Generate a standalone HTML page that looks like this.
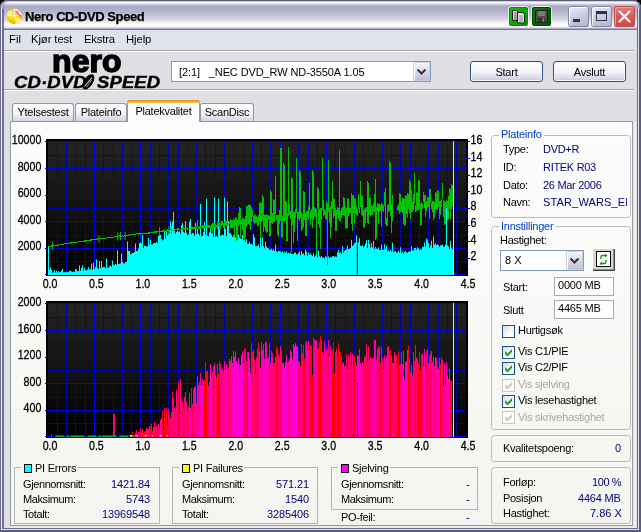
<!DOCTYPE html>
<html><head><meta charset="utf-8"><title>Nero CD-DVD Speed</title>
<style>
html,body{margin:0;padding:0;background:#e0dfe3;}
body{width:641px;height:532px;position:relative;overflow:hidden;font-family:"Liberation Sans",sans-serif;font-size:11px;}
.t{will-change:transform;position:absolute;white-space:nowrap;line-height:13px;font-family:"Liberation Sans",sans-serif;font-size:11px;color:#000;}
</style></head><body>
<div style="position:absolute;left:0px;top:0px;width:641px;height:532px;background:#e0dfe3;"></div>
<div style="position:absolute;left:0;top:0;width:641px;height:10px;background:#000;"></div>
<div style="position:absolute;left:0px;top:0px;width:641px;height:30px;background:linear-gradient(#5c5c7c 0px,#9a9ab4 1px,#ffffff 2px,#f4f4f8 3px,#c8c8dc 4.5px,#a9a9c5 6.5px,#b2b2ca 11px,#c0c0d2 15px,#d4d4e0 19px,#ececf0 22px,#ffffff 24.5px,#fcfcfc 26px,#e4e4e6 27.5px,#a8a8c0 28.5px,#787898 29.5px);border-radius:8px 8px 0 0;box-shadow:inset 1px 0 0 #6a6a88,inset -1px 0 0 #5c5c7c,inset 0 1px 0 #5c5c7c,inset 2px 0 0 rgba(255,255,255,0.55),inset -2px 0 0 rgba(140,140,172,0.6),inset 4px 0 0 rgba(140,140,172,0.5);"></div>
<div style="position:absolute;left:4px;top:30px;width:633px;height:20px;background:#e0e2ec;"></div>
<div style="position:absolute;left:4px;top:50px;width:630px;height:1px;background:#a4a4a8;"></div>
<div style="position:absolute;left:4px;top:51px;width:630px;height:1px;background:#fff;"></div>
<div style="position:absolute;left:4px;top:89px;width:630px;height:1px;background:#a4a4a8;"></div>
<div style="position:absolute;left:4px;top:90px;width:630px;height:1px;background:#fff;"></div>
<div style="position:absolute;left:0px;top:9px;width:641px;height:523px;border-left:1px solid #686890;border-right:2px solid #5c5c7c;border-bottom:2px solid #5c5c7c;box-sizing:border-box;"></div>
<div style="position:absolute;left:1px;top:9px;width:638px;height:521px;border-left:1px solid #f0f0f6;border-right:1px solid #e0e0ec;border-bottom:1px solid #e0e0ec;box-sizing:border-box;"></div>
<div style="position:absolute;left:2px;top:9px;width:636px;height:520px;border-left:2px solid #6e6e92;border-right:1px solid #6c6c8c;border-bottom:1px solid #6c6c8c;box-sizing:border-box;"></div>
<svg style="position:absolute;left:5.5px;top:7.5px" width="17" height="17" viewBox="0 0 17 17"><defs><radialGradient id="cd" cx="0.4" cy="0.4" r="0.65"><stop offset="0" stop-color="#ffe860"/><stop offset="0.55" stop-color="#ffd000"/><stop offset="1" stop-color="#e0a000"/></radialGradient></defs><circle cx="8.3" cy="8.3" r="7.7" fill="url(#cd)"/><path d="M8.3 8.3 L0.6 8.3 A7.7 7.7 0 0 1 4.4 1.7 Z" fill="#fff080"/><path d="M8.3 8.3 L15.5 11 A7.7 7.7 0 0 1 9.6 15.9 Z" fill="#fff080"/><path d="M8.3 8.3 L7.6 0.7 A7.7 7.7 0 0 1 15.9 7 Z" fill="#f2eeee"/><circle cx="8.3" cy="8.3" r="1.4" fill="#fff8c8"/><path d="M9.5 2.8 L14.2 8" stroke="#e83818" stroke-width="1.1"/><path d="M12.5 2.8 L11.3 5.4 M9.3 5 L10.5 7" stroke="#f07050" stroke-width="0.9"/></svg>
<span class="t" style="left:25.3px;top:10.3px;color:#000;font-size:13px;letter-spacing:-0.42px;font-weight:bold;-webkit-text-stroke:0.25px #000;">Nero CD-DVD Speed</span>
<span class="t" style="left:8.5px;top:32.8px;color:#000;font-size:11.3px;letter-spacing:0px;">Fil</span>
<span class="t" style="left:30.5px;top:32.8px;color:#000;font-size:11.3px;letter-spacing:-0.1px;">Kjør test</span>
<span class="t" style="left:83.5px;top:32.8px;color:#000;font-size:11.3px;letter-spacing:-0.2px;">Ekstra</span>
<span class="t" style="left:125.5px;top:32.8px;color:#000;font-size:11.3px;letter-spacing:-0.1px;">Hjelp</span>
<div style="position:absolute;left:568px;top:6px;width:21px;height:21px;border-radius:3px;background:linear-gradient(160deg,#f0f0f8,#ccccde 50%,#b0b0cc);box-shadow:inset 0 0 0 1px #8484a8, inset 1px 1px 0 1px #fff;"></div>
<div style="position:absolute;left:591px;top:6px;width:21px;height:21px;border-radius:3px;background:linear-gradient(160deg,#f0f0f8,#ccccde 50%,#b0b0cc);box-shadow:inset 0 0 0 1px #8484a8, inset 1px 1px 0 1px #fff;"></div>
<div style="position:absolute;left:614px;top:6px;width:21px;height:21px;border-radius:3px;background:linear-gradient(#e88080,#d85c5c 45%,#c84848);box-shadow:inset 0 0 0 1px #b85050, inset 1px 1px 0 1px #f0a0a0;"></div>
<div style="position:absolute;left:573px;top:19px;width:7px;height:3px;background:#30304c;"></div>
<div style="position:absolute;left:596px;top:11px;width:11px;height:10px;border:1px solid #30304c;border-top:3px solid #30304c;box-sizing:border-box;"></div>
<svg style="position:absolute;left:614px;top:6px" width="21" height="21"><path d="M5.5 5.5 L15.5 15.5 M15.5 5.5 L5.5 15.5" stroke="#fff" stroke-width="2.3" stroke-linecap="round"/></svg>
<div style="position:absolute;left:509px;top:7px;width:19px;height:19px;border-radius:3px;background:linear-gradient(135deg,#18c018,#00a800 60%,#009800);box-shadow:inset 0 0 0 1px #009000, 0 0 0 1px rgba(255,255,255,0.75);"></div>
<div style="position:absolute;left:532px;top:7px;width:19px;height:19px;border-radius:3px;background:linear-gradient(135deg,#088808,#006800 60%,#005400);box-shadow:inset 0 0 0 1px #004000, 0 0 0 1px rgba(255,255,255,0.75);"></div>
<svg style="position:absolute;left:509px;top:7px" width="19" height="19"><path d="M3.5 3.5h4l1.5 1.5v8.5h-5.5z" fill="#d4d4d4" stroke="#202020" stroke-width="1"/><path d="M5 6h3M5 8h3M5 10h3M5 12h3" stroke="#686868" stroke-width="0.9"/><path d="M8.5 5.5h5l2 2v8.5h-7z" fill="#e4e4e4" stroke="#202020" stroke-width="1"/><path d="M10 9h4M10 11h4M10 13h4M10 15h4" stroke="#787878" stroke-width="0.9"/></svg>
<svg style="position:absolute;left:532px;top:7px" width="19" height="19"><rect x="3.5" y="3.5" width="12" height="12" fill="#4c4c4c" stroke="#181818" stroke-width="1"/><rect x="6" y="4" width="7" height="5" fill="#7c7c7c"/><rect x="6" y="11" width="7" height="4.5" fill="#303030"/><rect x="10.5" y="11.5" width="1.6" height="3.2" fill="#8c8c8c"/><rect x="13.6" y="4.2" width="1" height="1" fill="#30c030"/></svg>
<span class="t" style="left:52px;top:45.5px;font-size:32px;font-weight:bold;letter-spacing:0.1px;line-height:30px;-webkit-text-stroke:1.5px #000">nero</span>
<span class="t" style="left:14px;top:72.8px;font-size:13px;font-weight:bold;font-style:italic;letter-spacing:0.1px;line-height:16px;transform:scale(1.42,1.25);transform-origin:0 0;-webkit-text-stroke:0.35px #000">CD·DVD</span>
<span class="t" style="left:96.5px;top:72.8px;font-size:13px;font-weight:bold;font-style:italic;letter-spacing:0.1px;line-height:16px;transform:scale(1.42,1.25);transform-origin:0 0;-webkit-text-stroke:0.35px #000">SPEED</span>
<svg style="position:absolute;left:80px;top:73px" width="17" height="18"><ellipse cx="8.3" cy="8.8" rx="4.6" ry="8.6" transform="rotate(33 8.3 8.8)" fill="#000"/><path d="M4.5 13.5 L12 4.5" stroke="#e0dfe3" stroke-width="1.1"/><path d="M6.5 14 Q10 10 11.5 7" stroke="#e0dfe3" stroke-width="0.7" fill="none"/></svg>
<div style="position:absolute;left:171px;top:61px;width:260px;height:21px;background:#fff;border:1px solid #7f9db9;box-sizing:border-box;"></div>
<span class="t" style="left:178.5px;top:65.9px;color:#000;font-size:11px;letter-spacing:-0.1px;">[2:1]&nbsp;&nbsp; _NEC DVD_RW ND-3550A 1.05</span>
<div style="position:absolute;left:413px;top:62px;width:17px;height:19px;border-radius:2px;background:linear-gradient(#f4f4fa,#dcdce8 50%,#bcbcd0);box-shadow:inset 0 0 0 1px #ccccdc, inset 1px 1px 0 1px #fff;"></div>
<svg style="position:absolute;left:413px;top:62px" width="17" height="19"><path d="M4.5 7.5 L8.5 11.5 L12.5 7.5" stroke="#303040" stroke-width="2" fill="none"/></svg>
<div style="position:absolute;left:470px;top:61px;width:73px;height:21px;border-radius:3px;border:1px solid #334c80;box-sizing:border-box;background:linear-gradient(#ffffff,#f4f4f8 50%,#d8d8e8 85%,#c0c0d8);box-shadow:inset 0 0 0 1px #f8f8ff;"></div>
<span class="t" style="left:470px;top:66px;width:73px;text-align:center;letter-spacing:-0.2px">Start</span>
<div style="position:absolute;left:553px;top:61px;width:73px;height:21px;border-radius:3px;border:1px solid #334c80;box-sizing:border-box;background:linear-gradient(#ffffff,#f4f4f8 50%,#d8d8e8 85%,#c0c0d8);box-shadow:inset 0 0 0 1px #f8f8ff;"></div>
<span class="t" style="left:553px;top:66px;width:73px;text-align:center;letter-spacing:-0.2px">Avslutt</span>
<div style="position:absolute;left:10px;top:121px;width:626px;height:407px;background:#ecece4;"></div>
<div style="position:absolute;left:10px;top:121px;width:623px;height:405px;background:linear-gradient(#fcfcfe,#f9f9f7 45%,#f4f4f0);border:1px solid #919b9c;box-sizing:border-box;"></div>
<div style="position:absolute;left:12px;top:103px;width:62px;height:18px;border-radius:3px 3px 0 0;border:1px solid #919b9c;border-bottom:none;box-sizing:border-box;background:linear-gradient(#ffffff,#f0f0f6 60%,#d4d4e4);"></div>
<span class="t" style="left:12px;top:106.3px;width:62px;text-align:center;letter-spacing:-0.25px">Ytelsestest</span>
<div style="position:absolute;left:75px;top:103px;width:52px;height:18px;border-radius:3px 3px 0 0;border:1px solid #919b9c;border-bottom:none;box-sizing:border-box;background:linear-gradient(#ffffff,#f0f0f6 60%,#d4d4e4);"></div>
<span class="t" style="left:75px;top:106.3px;width:52px;text-align:center;letter-spacing:-0.25px">Plateinfo</span>
<div style="position:absolute;left:200px;top:103px;width:54px;height:18px;border-radius:3px 3px 0 0;border:1px solid #919b9c;border-bottom:none;box-sizing:border-box;background:linear-gradient(#ffffff,#f0f0f6 60%,#d4d4e4);"></div>
<span class="t" style="left:200px;top:106.3px;width:54px;text-align:center;letter-spacing:-0.25px">ScanDisc</span>
<div style="position:absolute;left:127px;top:100px;width:73px;height:22px;border-radius:3px 3px 0 0;border:1px solid #919b9c;border-bottom:none;box-sizing:border-box;background:#fcfcfe;"></div>
<div style="position:absolute;left:127px;top:100px;width:73px;height:3px;border-radius:3px 3px 0 0;background:linear-gradient(#e68b2c,#ffc73c);"></div>
<span class="t" style="left:127px;top:105.3px;width:73px;text-align:center;letter-spacing:-0.25px">Platekvalitet</span>
<svg width="641" height="532" viewBox="0 0 641 532" style="position:absolute;left:0;top:0" font-family="Liberation Sans, sans-serif" font-size="11">
<defs><linearGradient id="g1" x1="0" y1="0" x2="0" y2="1"><stop offset="0" stop-color="#242424"/><stop offset="1" stop-color="#000"/></linearGradient></defs>
<rect x="46" y="139" width="422" height="137" fill="#000" shape-rendering="crispEdges"/>
<rect x="48" y="141" width="418" height="134" fill="url(#g1)" shape-rendering="crispEdges"/>
<path d="M48 155.5H466M48 181.5H466M48 208.5H466M48 235.5H466M48 261.5H466M57.5 141V275M66.5 141V275M75.5 141V275M85.5 141V275M103.5 141V275M113.5 141V275M122.5 141V275M131.5 141V275M150.5 141V275M159.5 141V275M168.5 141V275M178.5 141V275M196.5 141V275M205.5 141V275M215.5 141V275M224.5 141V275M243.5 141V275M252.5 141V275M261.5 141V275M270.5 141V275M289.5 141V275M298.5 141V275M308.5 141V275M317.5 141V275M335.5 141V275M345.5 141V275M354.5 141V275M363.5 141V275M382.5 141V275M391.5 141V275M400.5 141V275M410.5 141V275M428.5 141V275M438.5 141V275M447.5 141V275M456.5 141V275" stroke="#0000b4" stroke-width="1" fill="none" shape-rendering="crispEdges"/>
<path d="M45 141.5H466M45 168.5H466M45 195.5H466M45 221.5H466M45 248.5H466M45 274.5H466M94.5 141V275M140.5 141V275M187.5 141V275M233.5 141V275M280.5 141V275M326.5 141V275M373.5 141V275M419.5 141V275" stroke="#0000ee" stroke-width="1" fill="none" shape-rendering="crispEdges"/>
<path d="M48.0 275.0 L48.0 246.6 L49.0 246.6 L49.0 269.6 L50.0 269.6 L50.0 266.9 L51.0 266.9 L51.0 269.8 L52.0 269.8 L52.0 272.5 L53.0 272.5 L53.0 272.5 L54.0 272.5 L54.0 270.2 L55.0 270.2 L55.0 272.4 L56.0 272.4 L56.0 270.8 L57.0 270.8 L57.0 272.5 L58.0 272.5 L58.0 271.2 L59.0 271.2 L59.0 272.2 L60.0 272.2 L60.0 272.1 L61.0 272.1 L61.0 270.5 L62.0 270.5 L62.0 268.9 L63.0 268.9 L63.0 272.2 L64.0 272.2 L64.0 272.0 L65.0 272.0 L65.0 272.5 L66.0 272.5 L66.0 271.8 L67.0 271.8 L67.0 272.2 L68.0 272.2 L68.0 272.1 L69.0 272.1 L69.0 270.8 L70.0 270.8 L70.0 270.8 L71.0 270.8 L71.0 271.6 L72.0 271.6 L72.0 272.0 L73.0 272.0 L73.0 271.5 L74.0 271.5 L74.0 272.0 L75.0 272.0 L75.0 269.0 L76.0 269.0 L76.0 269.4 L77.0 269.4 L77.0 271.3 L78.0 271.3 L78.0 271.1 L79.0 271.1 L79.0 265.4 L80.0 265.4 L80.0 270.8 L81.0 270.8 L81.0 268.0 L82.0 268.0 L82.0 265.4 L83.0 265.4 L83.0 270.8 L84.0 270.8 L84.0 268.0 L85.0 268.0 L85.0 270.1 L86.0 270.1 L86.0 270.5 L87.0 270.5 L87.0 269.4 L88.0 269.4 L88.0 267.3 L89.0 267.3 L89.0 269.6 L90.0 269.6 L90.0 269.3 L91.0 269.3 L91.0 263.5 L92.0 263.5 L92.0 269.6 L93.0 269.6 L93.0 262.7 L94.0 262.7 L94.0 268.8 L95.0 268.8 L95.0 266.8 L96.0 266.8 L96.0 259.4 L97.0 259.4 L97.0 268.0 L98.0 268.0 L98.0 269.1 L99.0 269.1 L99.0 261.1 L100.0 261.1 L100.0 267.9 L101.0 267.9 L101.0 261.1 L102.0 261.1 L102.0 267.6 L103.0 267.6 L103.0 267.1 L104.0 267.1 L104.0 267.0 L105.0 267.0 L105.0 268.3 L106.0 268.3 L106.0 258.6 L107.0 258.6 L107.0 267.4 L108.0 267.4 L108.0 268.0 L109.0 268.0 L109.0 266.6 L110.0 266.6 L110.0 265.6 L111.0 265.6 L111.0 266.8 L112.0 266.8 L112.0 260.6 L113.0 260.6 L113.0 264.7 L114.0 264.7 L114.0 265.2 L115.0 265.2 L115.0 264.0 L116.0 264.0 L116.0 264.8 L117.0 264.8 L117.0 250.2 L118.0 250.2 L118.0 264.1 L119.0 264.1 L119.0 263.8 L120.0 263.8 L120.0 263.5 L121.0 263.5 L121.0 253.4 L122.0 253.4 L122.0 261.8 L123.0 261.8 L123.0 263.2 L124.0 263.2 L124.0 263.4 L125.0 263.4 L125.0 262.0 L126.0 262.0 L126.0 262.0 L127.0 262.0 L127.0 241.5 L128.0 241.5 L128.0 251.0 L129.0 251.0 L129.0 250.9 L130.0 250.9 L130.0 254.6 L131.0 254.6 L131.0 254.0 L132.0 254.0 L132.0 252.9 L133.0 252.9 L133.0 253.0 L134.0 253.0 L134.0 252.1 L135.0 252.1 L135.0 243.6 L136.0 243.6 L136.0 251.0 L137.0 251.0 L137.0 250.9 L138.0 250.9 L138.0 248.6 L139.0 248.6 L139.0 243.2 L140.0 243.2 L140.0 242.6 L141.0 242.6 L141.0 243.6 L142.0 243.6 L142.0 235.0 L143.0 235.0 L143.0 248.0 L144.0 248.0 L144.0 245.8 L145.0 245.8 L145.0 246.1 L146.0 246.1 L146.0 246.6 L147.0 246.6 L147.0 246.3 L148.0 246.3 L148.0 237.9 L149.0 237.9 L149.0 244.5 L150.0 244.5 L150.0 240.0 L151.0 240.0 L151.0 244.6 L152.0 244.6 L152.0 244.5 L153.0 244.5 L153.0 243.3 L154.0 243.3 L154.0 243.0 L155.0 243.0 L155.0 243.1 L156.0 243.1 L156.0 242.1 L157.0 242.1 L157.0 243.3 L158.0 243.3 L158.0 235.7 L159.0 235.7 L159.0 234.0 L160.0 234.0 L160.0 234.7 L161.0 234.7 L161.0 239.1 L162.0 239.1 L162.0 240.5 L163.0 240.5 L163.0 239.5 L164.0 239.5 L164.0 231.5 L165.0 231.5 L165.0 238.6 L166.0 238.6 L166.0 231.3 L167.0 231.3 L167.0 235.4 L168.0 235.4 L168.0 233.4 L169.0 233.4 L169.0 232.9 L170.0 232.9 L170.0 221.3 L171.0 221.3 L171.0 230.3 L172.0 230.3 L172.0 221.4 L173.0 221.4 L173.0 212.0 L174.0 212.0 L174.0 230.6 L175.0 230.6 L175.0 233.8 L176.0 233.8 L176.0 232.0 L177.0 232.0 L177.0 230.5 L178.0 230.5 L178.0 231.8 L179.0 231.8 L179.0 231.3 L180.0 231.3 L180.0 233.8 L181.0 233.8 L181.0 225.3 L182.0 225.3 L182.0 222.9 L183.0 222.9 L183.0 232.0 L184.0 232.0 L184.0 232.8 L185.0 232.8 L185.0 220.9 L186.0 220.9 L186.0 232.8 L187.0 232.8 L187.0 235.2 L188.0 235.2 L188.0 234.4 L189.0 234.4 L189.0 221.7 L190.0 221.7 L190.0 218.9 L191.0 218.9 L191.0 234.2 L192.0 234.2 L192.0 232.8 L193.0 232.8 L193.0 233.3 L194.0 233.3 L194.0 236.1 L195.0 236.1 L195.0 222.7 L196.0 222.7 L196.0 234.0 L197.0 234.0 L197.0 228.7 L198.0 228.7 L198.0 233.4 L199.0 233.4 L199.0 235.4 L200.0 235.4 L200.0 204.0 L201.0 204.0 L201.0 236.3 L202.0 236.3 L202.0 235.9 L203.0 235.9 L203.0 232.3 L204.0 232.3 L204.0 222.1 L205.0 222.1 L205.0 234.7 L206.0 234.7 L206.0 198.7 L207.0 198.7 L207.0 235.9 L208.0 235.9 L208.0 236.3 L209.0 236.3 L209.0 232.4 L210.0 232.4 L210.0 226.0 L211.0 226.0 L211.0 233.6 L212.0 233.6 L212.0 232.7 L213.0 232.7 L213.0 236.9 L214.0 236.9 L214.0 197.4 L215.0 197.4 L215.0 236.4 L216.0 236.4 L216.0 235.6 L217.0 235.6 L217.0 237.1 L218.0 237.1 L218.0 198.7 L219.0 198.7 L219.0 223.7 L220.0 223.7 L220.0 235.8 L221.0 235.8 L221.0 235.3 L222.0 235.3 L222.0 234.4 L223.0 234.4 L223.0 235.2 L224.0 235.2 L224.0 197.4 L225.0 197.4 L225.0 229.0 L226.0 229.0 L226.0 236.1 L227.0 236.1 L227.0 201.3 L228.0 201.3 L228.0 221.0 L229.0 221.0 L229.0 233.4 L230.0 233.4 L230.0 233.0 L231.0 233.0 L231.0 234.7 L232.0 234.7 L232.0 237.1 L233.0 237.1 L233.0 235.2 L234.0 235.2 L234.0 234.4 L235.0 234.4 L235.0 237.4 L236.0 237.4 L236.0 237.2 L237.0 237.2 L237.0 236.3 L238.0 236.3 L238.0 234.6 L239.0 234.6 L239.0 237.7 L240.0 237.7 L240.0 238.4 L241.0 238.4 L241.0 238.9 L242.0 238.9 L242.0 235.0 L243.0 235.0 L243.0 240.3 L244.0 240.3 L244.0 239.6 L245.0 239.6 L245.0 242.0 L246.0 242.0 L246.0 239.3 L247.0 239.3 L247.0 244.1 L248.0 244.1 L248.0 243.8 L249.0 243.8 L249.0 241.7 L250.0 241.7 L250.0 243.9 L251.0 243.9 L251.0 243.8 L252.0 243.8 L252.0 244.8 L253.0 244.8 L253.0 233.9 L254.0 233.9 L254.0 237.3 L255.0 237.3 L255.0 246.0 L256.0 246.0 L256.0 246.2 L257.0 246.2 L257.0 245.7 L258.0 245.7 L258.0 244.6 L259.0 244.6 L259.0 247.7 L260.0 247.7 L260.0 237.0 L261.0 237.0 L261.0 246.3 L262.0 246.3 L262.0 237.4 L263.0 237.4 L263.0 245.9 L264.0 245.9 L264.0 248.2 L265.0 248.2 L265.0 241.8 L266.0 241.8 L266.0 246.5 L267.0 246.5 L267.0 247.7 L268.0 247.7 L268.0 248.5 L269.0 248.5 L269.0 250.1 L270.0 250.1 L270.0 249.8 L271.0 249.8 L271.0 248.7 L272.0 248.7 L272.0 250.6 L273.0 250.6 L273.0 249.3 L274.0 249.3 L274.0 251.1 L275.0 251.1 L275.0 244.5 L276.0 244.5 L276.0 251.3 L277.0 251.3 L277.0 252.2 L278.0 252.2 L278.0 251.1 L279.0 251.1 L279.0 250.9 L280.0 250.9 L280.0 251.6 L281.0 251.6 L281.0 252.3 L282.0 252.3 L282.0 251.2 L283.0 251.2 L283.0 253.2 L284.0 253.2 L284.0 251.6 L285.0 251.6 L285.0 252.9 L286.0 252.9 L286.0 251.2 L287.0 251.2 L287.0 253.7 L288.0 253.7 L288.0 252.8 L289.0 252.8 L289.0 253.6 L290.0 253.6 L290.0 252.3 L291.0 252.3 L291.0 253.8 L292.0 253.8 L292.0 253.7 L293.0 253.7 L293.0 254.0 L294.0 254.0 L294.0 252.8 L295.0 252.8 L295.0 252.5 L296.0 252.5 L296.0 254.6 L297.0 254.6 L297.0 254.1 L298.0 254.1 L298.0 252.9 L299.0 252.9 L299.0 251.6 L300.0 251.6 L300.0 255.2 L301.0 255.2 L301.0 250.9 L302.0 250.9 L302.0 253.7 L303.0 253.7 L303.0 253.6 L304.0 253.6 L304.0 255.3 L305.0 255.3 L305.0 249.5 L306.0 249.5 L306.0 251.8 L307.0 251.8 L307.0 255.7 L308.0 255.7 L308.0 252.7 L309.0 252.7 L309.0 254.5 L310.0 254.5 L310.0 253.4 L311.0 253.4 L311.0 255.1 L312.0 255.1 L312.0 256.1 L313.0 256.1 L313.0 252.9 L314.0 252.9 L314.0 256.9 L315.0 256.9 L315.0 255.4 L316.0 255.4 L316.0 250.9 L317.0 250.9 L317.0 257.5 L318.0 257.5 L318.0 250.6 L319.0 250.6 L319.0 256.3 L320.0 256.3 L320.0 257.2 L321.0 257.2 L321.0 256.1 L322.0 256.1 L322.0 257.6 L323.0 257.6 L323.0 257.6 L324.0 257.6 L324.0 258.4 L325.0 258.4 L325.0 256.6 L326.0 256.6 L326.0 256.7 L327.0 256.7 L327.0 254.0 L328.0 254.0 L328.0 256.4 L329.0 256.4 L329.0 257.7 L330.0 257.7 L330.0 257.0 L331.0 257.0 L331.0 257.5 L332.0 257.5 L332.0 256.1 L333.0 256.1 L333.0 255.9 L334.0 255.9 L334.0 256.7 L335.0 256.7 L335.0 256.5 L336.0 256.5 L336.0 256.7 L337.0 256.7 L337.0 252.6 L338.0 252.6 L338.0 250.1 L339.0 250.1 L339.0 252.9 L340.0 252.9 L340.0 252.2 L341.0 252.2 L341.0 254.0 L342.0 254.0 L342.0 246.3 L343.0 246.3 L343.0 252.5 L344.0 252.5 L344.0 250.9 L345.0 250.9 L345.0 249.9 L346.0 249.9 L346.0 249.4 L347.0 249.4 L347.0 245.4 L348.0 245.4 L348.0 248.9 L349.0 248.9 L349.0 248.8 L350.0 248.8 L350.0 247.9 L351.0 247.9 L351.0 239.7 L352.0 239.7 L352.0 246.0 L353.0 246.0 L353.0 244.9 L354.0 244.9 L354.0 243.1 L355.0 243.1 L355.0 242.6 L356.0 242.6 L356.0 235.4 L357.0 235.4 L357.0 243.4 L358.0 243.4 L358.0 242.2 L359.0 242.2 L359.0 238.3 L360.0 238.3 L360.0 245.9 L361.0 245.9 L361.0 245.9 L362.0 245.9 L362.0 244.9 L363.0 244.9 L363.0 247.5 L364.0 247.5 L364.0 245.9 L365.0 245.9 L365.0 243.7 L366.0 243.7 L366.0 240.0 L367.0 240.0 L367.0 248.0 L368.0 248.0 L368.0 239.9 L369.0 239.9 L369.0 244.1 L370.0 244.1 L370.0 247.5 L371.0 247.5 L371.0 243.0 L372.0 243.0 L372.0 247.6 L373.0 247.6 L373.0 241.1 L374.0 241.1 L374.0 249.0 L375.0 249.0 L375.0 247.1 L376.0 247.1 L376.0 248.4 L377.0 248.4 L377.0 249.0 L378.0 249.0 L378.0 247.4 L379.0 247.4 L379.0 250.0 L380.0 250.0 L380.0 250.1 L381.0 250.1 L381.0 244.6 L382.0 244.6 L382.0 249.8 L383.0 249.8 L383.0 249.8 L384.0 249.8 L384.0 244.2 L385.0 244.2 L385.0 248.7 L386.0 248.7 L386.0 245.8 L387.0 245.8 L387.0 251.2 L388.0 251.2 L388.0 250.3 L389.0 250.3 L389.0 251.6 L390.0 251.6 L390.0 249.7 L391.0 249.7 L391.0 251.6 L392.0 251.6 L392.0 242.5 L393.0 242.5 L393.0 252.3 L394.0 252.3 L394.0 251.5 L395.0 251.5 L395.0 251.0 L396.0 251.0 L396.0 252.4 L397.0 252.4 L397.0 252.4 L398.0 252.4 L398.0 250.8 L399.0 250.8 L399.0 252.8 L400.0 252.8 L400.0 247.2 L401.0 247.2 L401.0 253.2 L402.0 253.2 L402.0 251.7 L403.0 251.7 L403.0 253.7 L404.0 253.7 L404.0 251.9 L405.0 251.9 L405.0 250.7 L406.0 250.7 L406.0 252.4 L407.0 252.4 L407.0 252.8 L408.0 252.8 L408.0 251.7 L409.0 251.7 L409.0 251.2 L410.0 251.2 L410.0 251.6 L411.0 251.6 L411.0 246.2 L412.0 246.2 L412.0 250.1 L413.0 250.1 L413.0 250.7 L414.0 250.7 L414.0 248.0 L415.0 248.0 L415.0 247.8 L416.0 247.8 L416.0 249.7 L417.0 249.7 L417.0 247.3 L418.0 247.3 L418.0 248.3 L419.0 248.3 L419.0 250.2 L420.0 250.2 L420.0 249.0 L421.0 249.0 L421.0 249.6 L422.0 249.6 L422.0 246.7 L423.0 246.7 L423.0 247.1 L424.0 247.1 L424.0 242.4 L425.0 242.4 L425.0 246.4 L426.0 246.4 L426.0 238.4 L427.0 238.4 L427.0 239.6 L428.0 239.6 L428.0 243.3 L429.0 243.3 L429.0 248.2 L430.0 248.2 L430.0 245.5 L431.0 245.5 L431.0 240.8 L432.0 240.8 L432.0 248.1 L433.0 248.1 L433.0 236.7 L434.0 236.7 L434.0 244.8 L435.0 244.8 L435.0 243.3 L436.0 243.3 L436.0 245.3 L437.0 245.3 L437.0 244.3 L438.0 244.3 L438.0 245.3 L439.0 245.3 L439.0 247.1 L440.0 247.1 L440.0 245.4 L441.0 245.4 L441.0 245.0 L442.0 245.0 L442.0 244.5 L443.0 244.5 L443.0 246.8 L444.0 246.8 L444.0 246.6 L445.0 246.6 L445.0 244.5 L446.0 244.5 L446.0 208.0 L447.0 208.0 L447.0 245.2 L448.0 245.2 L448.0 246.6 L449.0 246.6 L449.0 249.0 L450.0 249.0 L450.0 240.9 L451.0 240.9 L451.0 247.8 L452.0 247.8 L452.0 249.2 L453.0 249.2 L453.0 275.0 Z" fill="#00ffff"/>
<rect x="356.8" y="243.9" width="1" height="30.6" fill="#000"/>
<path d="M48.0 246.6 L48.5 246.3 L49.0 246.5 L49.5 246.3 L50.0 246.5 L50.5 246.3 L51.0 246.2 L51.5 246.0 L52.0 245.9 L52.5 245.8 L53.0 245.8 L53.5 245.9 L54.0 245.8 L54.5 245.7 L55.0 245.8 L55.5 245.3 L56.0 245.3 L56.5 245.3 L57.0 245.1 L57.5 245.0 L58.0 245.4 L58.5 245.0 L59.0 245.0 L59.5 244.9 L60.0 244.6 L60.5 244.5 L61.0 244.3 L61.5 244.6 L62.0 244.2 L62.5 244.5 L63.0 244.3 L63.5 244.1 L64.0 243.9 L64.5 243.9 L65.0 243.7 L65.5 244.0 L66.0 244.0 L66.5 243.5 L67.0 243.8 L67.5 243.8 L68.0 243.3 L68.5 243.3 L69.0 243.0 L69.5 243.3 L70.0 243.2 L70.5 242.9 L71.0 243.0 L71.5 243.1 L72.0 242.7 L72.5 242.9 L73.0 242.7 L73.5 242.8 L74.0 242.6 L74.5 242.5 L75.0 242.3 L75.5 242.3 L76.0 242.2 L76.5 242.1 L77.0 242.2 L77.5 242.2 L78.0 242.0 L78.5 241.9 L79.0 241.7 L79.5 241.7 L80.0 241.5 L80.5 241.6 L81.0 241.2 L81.5 241.3 L82.0 241.2 L82.5 241.5 L83.0 241.0 L83.5 241.0 L84.0 241.1 L84.5 241.0 L85.0 240.9 L85.5 241.0 L86.0 241.1 L86.5 240.7 L87.0 240.8 L87.5 240.5 L88.0 240.5 L88.5 240.6 L89.0 240.1 L89.5 240.1 L90.0 240.1 L90.5 239.9 L91.0 240.3 L91.5 240.0 L92.0 240.1 L92.5 239.8 L93.0 239.7 L93.5 239.8 L94.0 239.7 L94.5 239.6 L95.0 239.4 L95.5 239.7 L96.0 239.5 L96.5 239.2 L97.0 238.9 L97.5 239.0 L98.0 239.1 L98.5 238.7 L99.0 238.9 L99.5 239.0 L100.0 238.8 L100.5 239.0 L101.0 238.7 L101.5 238.5 L102.0 238.6 L102.5 238.6 L103.0 238.5 L103.5 238.4 L104.0 238.3 L104.5 238.1 L105.0 238.1 L105.5 238.2 L106.0 238.1 L106.5 237.8 L107.0 237.7 L107.5 237.4 L108.0 237.7 L108.5 237.7 L109.0 237.6 L109.5 237.8 L110.0 237.6 L110.5 237.5 L111.0 237.2 L111.5 237.3 L112.0 237.5 L112.5 237.2 L113.0 237.3 L113.5 237.2 L114.0 237.2 L114.5 236.8 L115.0 236.8 L115.5 236.5 L116.0 236.8 L116.5 237.0 L117.0 236.8 L117.5 236.5 L118.0 237.1 L118.5 236.1 L119.0 236.4 L119.5 235.9 L120.0 236.8 L120.5 235.8 L121.0 236.5 L121.5 236.7 L122.0 235.9 L122.5 236.0 L123.0 235.7 L123.5 236.8 L124.0 236.2 L124.5 235.9 L125.0 236.1 L125.5 236.2 L126.0 235.2 L126.5 235.5 L127.0 235.4 L127.5 235.5 L128.0 234.9 L128.5 235.1 L129.0 235.5 L129.5 234.9 L130.0 235.0 L130.5 234.7 L131.0 235.2 L131.5 234.9 L132.0 234.7 L132.5 234.5 L133.0 235.0 L133.5 234.9 L134.0 234.2 L134.5 234.6 L135.0 234.2 L135.5 234.8 L136.0 233.7 L136.5 233.7 L137.0 234.2 L137.5 233.7 L138.0 234.0 L138.5 234.0 L139.0 233.9 L139.5 233.5 L140.0 234.2 L140.5 234.2 L141.0 233.6 L141.5 233.8 L142.0 233.5 L142.5 233.8 L143.0 233.4 L143.5 233.4 L144.0 233.4 L144.5 233.1 L145.0 233.2 L145.5 233.6 L146.0 233.1 L146.5 233.3 L147.0 232.9 L147.5 233.6 L148.0 232.7 L148.5 233.1 L149.0 232.8 L149.5 233.2 L150.0 232.7 L150.5 232.3 L151.0 232.1 L151.5 232.3 L152.0 233.0 L152.5 232.4 L153.0 232.1 L153.5 232.7 L154.0 232.0 L154.5 232.5 L155.0 231.6 L155.5 231.8 L156.0 232.5 L156.5 232.3 L157.0 231.4 L157.5 231.9 L158.0 231.1 L158.5 231.6 L159.0 231.4 L159.5 231.9 L160.0 231.5 L160.5 231.8 L161.0 232.2 L161.5 231.6 L162.0 231.7 L162.5 231.0 L163.0 230.6 L163.5 231.2 L164.0 231.2 L164.5 230.7 L165.0 231.0 L165.5 231.0 L166.0 231.0 L166.5 230.9 L167.0 230.4 L167.5 229.8 L168.0 230.4 L168.5 231.5 L169.0 231.0 L169.5 231.0 L170.0 230.3 L170.5 229.8 L171.0 230.1 L171.5 230.1 L172.0 229.7 L172.5 230.5 L173.0 230.0 L173.5 230.6 L174.0 230.3 L174.5 229.8 L175.0 229.8 L175.5 229.9 L176.0 229.2 L176.5 229.2 L177.0 229.8 L177.5 229.6 L178.0 228.5 L178.5 230.0 L179.0 229.0 L179.5 229.1 L180.0 229.3 L180.5 229.3 L181.0 229.1 L181.5 229.2 L182.0 228.5 L182.5 229.0 L183.0 229.0 L183.5 228.9 L184.0 228.5 L184.5 229.4 L185.0 229.0 L185.5 229.2 L186.0 228.1 L186.5 228.8 L187.0 229.1 L187.5 229.2 L188.0 228.6 L188.5 228.7 L189.0 228.1 L189.5 228.2 L190.0 228.4 L190.5 228.5 L191.0 228.6 L191.5 228.6 L192.0 227.4 L192.5 228.8 L193.0 227.6 L193.5 228.9 L194.0 227.0 L194.5 228.6 L195.0 226.9 L195.5 228.2 L196.0 226.6 L196.5 228.6 L197.0 226.4 L197.5 220.8 L198.0 226.8 L198.5 228.6 L199.0 227.2 L199.5 228.6 L200.0 226.3 L200.5 228.6 L201.0 226.0 L201.5 227.8 L202.0 226.1 L202.5 227.5 L203.0 225.3 L203.5 228.1 L204.0 225.9 L204.5 227.5 L205.0 225.2 L205.5 227.1 L206.0 225.0 L206.5 227.9 L207.0 224.6 L207.5 227.7 L208.0 225.9 L208.5 227.0 L209.0 225.4 L209.5 227.4 L210.0 225.8 L210.5 228.7 L211.0 225.8 L211.5 228.2 L212.0 224.5 L212.5 231.2 L213.0 223.3 L213.5 227.4 L214.0 225.0 L214.5 227.2 L215.0 223.5 L215.5 228.6 L216.0 225.4 L216.5 226.3 L217.0 225.2 L217.5 228.2 L218.0 222.4 L218.5 225.6 L219.0 223.8 L219.5 228.3 L220.0 223.1 L220.5 228.2 L221.0 223.5 L221.5 225.5 L222.0 221.3 L222.5 225.0 L223.0 223.2 L223.5 227.8 L224.0 224.1 L224.5 227.1 L225.0 220.6 L225.5 224.9 L226.0 220.5 L226.5 225.4 L227.0 221.0 L227.5 225.3 L228.0 223.2 L228.5 224.6 L229.0 223.0 L229.5 223.8 L230.0 222.6 L230.5 227.5 L231.0 219.4 L231.5 227.2 L232.0 221.2 L232.5 227.3 L233.0 220.2 L233.5 224.7 L234.0 219.5 L234.5 236.7 L235.0 221.2 L235.5 225.8 L236.0 217.3 L236.5 226.1 L237.0 241.2 L237.5 226.9 L238.0 220.0 L238.5 225.1 L239.0 212.7 L239.5 223.3 L240.0 207.4 L240.5 237.0 L241.0 220.1 L241.5 223.9 L242.0 220.0 L242.5 229.2 L243.0 218.1 L243.5 225.7 L244.0 238.3 L244.5 239.2 L245.0 218.7 L245.5 237.0 L246.0 215.7 L246.5 226.4 L247.0 205.8 L247.5 224.2 L248.0 216.2 L248.5 223.4 L249.0 205.4 L249.5 224.2 L250.0 204.3 L250.5 229.7 L251.0 206.8 L251.5 221.3 L252.0 216.7 L252.5 210.3 L253.0 216.7 L253.5 221.6 L254.0 216.0 L254.5 223.9 L255.0 214.6 L255.5 222.9 L256.0 216.8 L256.5 222.3 L257.0 216.4 L257.5 225.3 L258.0 218.3 L258.5 225.3 L259.0 215.1 L259.5 220.4 L260.0 202.8 L260.5 237.1 L261.0 202.2 L261.5 221.2 L262.0 215.1 L262.5 221.0 L263.0 195.5 L263.5 231.3 L264.0 215.1 L264.5 226.6 L265.0 216.2 L265.5 230.7 L266.0 214.4 L266.5 220.4 L267.0 232.9 L267.5 220.9 L268.0 214.8 L268.5 219.2 L269.0 216.1 L269.5 220.6 L270.0 236.6 L270.5 228.7 L271.0 189.7 L271.5 222.9 L272.0 215.3 L272.5 223.4 L273.0 213.1 L273.5 221.3 L274.0 199.3 L274.5 221.8 L275.0 213.8 L275.5 176.4 L276.0 214.4 L276.5 220.0 L277.0 214.7 L277.5 222.9 L278.0 234.6 L278.5 236.5 L279.0 214.8 L279.5 223.4 L280.0 210.2 L280.5 220.8 L281.0 148.2 L281.5 220.8 L282.0 237.9 L282.5 223.0 L283.0 215.7 L283.5 220.9 L284.0 163.1 L284.5 221.1 L285.0 213.2 L285.5 219.4 L286.0 201.2 L286.5 222.0 L287.0 242.1 L287.5 220.2 L288.0 214.8 L288.5 147.3 L289.0 215.5 L289.5 204.1 L290.0 211.1 L290.5 218.3 L291.0 214.1 L291.5 251.2 L292.0 177.2 L292.5 224.6 L293.0 210.9 L293.5 242.9 L294.0 211.4 L294.5 231.7 L295.0 213.3 L295.5 217.1 L296.0 209.9 L296.5 158.1 L297.0 213.3 L297.5 240.4 L298.0 212.2 L298.5 218.6 L299.0 213.2 L299.5 220.7 L300.0 169.8 L300.5 217.9 L301.0 211.8 L301.5 230.3 L302.0 213.3 L302.5 228.6 L303.0 226.8 L303.5 226.4 L304.0 191.4 L304.5 219.9 L305.0 213.2 L305.5 217.2 L306.0 236.3 L306.5 219.0 L307.0 210.9 L307.5 216.4 L308.0 212.6 L308.5 219.2 L309.0 206.4 L309.5 183.9 L310.0 210.9 L310.5 224.5 L311.0 213.1 L311.5 217.6 L312.0 209.0 L312.5 228.0 L313.0 169.8 L313.5 219.1 L314.0 211.7 L314.5 215.8 L315.0 207.3 L315.5 216.2 L316.0 213.2 L316.5 253.7 L317.0 209.5 L317.5 194.7 L318.0 187.2 L318.5 223.1 L319.0 208.9 L319.5 227.5 L320.0 209.0 L320.5 248.7 L321.0 208.0 L321.5 219.1 L322.0 212.6 L322.5 158.1 L323.0 200.0 L323.5 215.9 L324.0 209.3 L324.5 214.7 L325.0 211.6 L325.5 218.1 L326.0 211.3 L326.5 219.3 L327.0 201.1 L327.5 264.5 L328.0 211.5 L328.5 160.6 L329.0 211.7 L329.5 222.6 L330.0 208.5 L330.5 237.9 L331.0 206.3 L331.5 226.8 L332.0 201.4 L332.5 181.4 L333.0 208.5 L333.5 217.2 L334.0 198.4 L334.5 215.2 L335.0 207.3 L335.5 217.7 L336.0 231.3 L336.5 215.1 L337.0 209.7 L337.5 213.5 L338.0 207.2 L338.5 218.3 L339.0 210.7 L339.5 150.6 L340.0 221.1 L340.5 215.5 L341.0 211.4 L341.5 217.2 L342.0 207.7 L342.5 214.7 L343.0 206.8 L343.5 214.4 L344.0 197.2 L344.5 215.2 L345.0 206.4 L345.5 228.0 L346.0 207.7 L346.5 217.7 L347.0 228.8 L347.5 212.7 L348.0 198.4 L348.5 215.6 L349.0 207.7 L349.5 213.3 L350.0 210.1 L350.5 212.8 L351.0 207.9 L351.5 223.1 L352.0 193.0 L352.5 230.4 L353.0 194.7 L353.5 212.6 L354.0 209.4 L354.5 222.2 L355.0 198.5 L355.5 213.5 L356.0 205.4 L356.5 214.9 L357.0 209.2 L357.5 215.9 L358.0 209.4 L358.5 194.5 L359.0 209.4 L359.5 212.2 L360.0 208.5 L360.5 181.4 L361.0 196.0 L361.5 214.4 L362.0 195.2 L362.5 215.1 L363.0 209.6 L363.5 214.0 L364.0 227.9 L364.5 214.9 L365.0 208.6 L365.5 222.4 L366.0 208.2 L366.5 211.3 L367.0 206.8 L367.5 222.6 L368.0 181.4 L368.5 223.4 L369.0 207.7 L369.5 213.9 L370.0 197.7 L370.5 215.4 L371.0 205.6 L371.5 214.9 L372.0 205.3 L372.5 214.6 L373.0 207.0 L373.5 210.8 L374.0 203.5 L374.5 211.7 L375.0 194.2 L375.5 179.7 L376.0 239.6 L376.5 214.2 L377.0 206.7 L377.5 210.6 L378.0 203.2 L378.5 223.2 L379.0 203.6 L379.5 210.2 L380.0 204.5 L380.5 211.0 L381.0 204.8 L381.5 226.8 L382.0 203.5 L382.5 210.8 L383.0 204.7 L383.5 211.5 L384.0 205.8 L384.5 192.2 L385.0 206.1 L385.5 188.1 L386.0 224.2 L386.5 218.8 L387.0 226.4 L387.5 211.7 L388.0 204.7 L388.5 211.1 L389.0 203.8 L389.5 211.0 L390.0 161.4 L390.5 215.1 L391.0 204.0 L391.5 232.1 L392.0 222.4 L392.5 194.7" fill="none" stroke="#00c000" stroke-width="1" stroke-linejoin="round" shape-rendering="crispEdges"/>
<path d="M397.5 210.1 L398.0 205.9 L398.5 210.2 L399.0 203.8 L399.5 213.2 L400.0 193.0 L400.5 211.1 L401.0 203.1 L401.5 211.5 L402.0 201.9 L402.5 213.0 L403.0 197.6 L403.5 223.1 L404.0 199.0 L404.5 208.6 L405.0 226.3 L405.5 208.3 L406.0 195.5 L406.5 214.0 L407.0 204.6 L407.5 218.0 L408.0 193.1 L408.5 208.5 L409.0 201.2 L409.5 213.0 L410.0 179.7 L410.5 218.6 L411.0 189.4 L411.5 211.2 L412.0 202.2 L412.5 211.5 L413.0 203.6 L413.5 209.6 L414.0 193.9 L414.5 173.9 L415.0 204.4 L415.5 211.9 L416.0 205.4 L416.5 210.8 L417.0 192.3 L417.5 210.0 L418.0 204.2 L418.5 209.2 L419.0 179.7 L419.5 208.8 L420.0 204.2 L420.5 211.9 L421.0 225.5 L421.5 207.7 L422.0 202.4 L422.5 208.1 L423.0 202.7 L423.5 192.6 L424.0 200.6 L424.5 207.5 L425.0 194.7 L425.5 216.4 L426.0 201.2 L426.5 210.9 L427.0 201.2 L427.5 207.8 L428.0 197.0 L428.5 206.7 L429.0 203.2 L429.5 218.5 L430.0 188.9 L430.5 191.2 L431.0 202.6 L431.5 208.4 L432.0 202.6 L432.5 211.1 L433.0 200.6 L433.5 219.4 L434.0 201.5 L434.5 217.7 L435.0 201.8 L435.5 208.5 L436.0 192.2 L436.5 209.5 L437.0 203.9 L437.5 209.9 L438.0 190.1 L438.5 206.2 L439.0 203.7 L439.5 218.3 L440.0 200.8 L440.5 214.7 L441.0 203.8 L441.5 206.9 L442.0 199.1 L442.5 183.9 L443.0 199.4 L443.5 216.5 L444.0 201.1 L444.5 207.2 L445.0 224.6 L445.5 208.1 L446.0 201.8 L446.5 206.7 L447.0 200.2 L447.5 217.6 L448.0 219.4 L448.5 206.0 L449.0 196.4 L449.5 208.6 L450.0 188.2 L450.5 218.5 L451.0 200.9 L451.5 209.7 L452.0 184.5 L452.5 206.3" fill="none" stroke="#00c000" stroke-width="1" stroke-linejoin="round" shape-rendering="crispEdges"/>
<path d="M52.6 241.7 V250.0" stroke="#00c000" stroke-width="1"/>
<path d="M99.1 234.8 V243.1" stroke="#00c000" stroke-width="1"/>
<path d="M117.7 232.4 V240.7" stroke="#00c000" stroke-width="1"/>
<path d="M120.5 232.0 V240.3" stroke="#00c000" stroke-width="1"/>
<path d="M125.1 231.5 V239.8" stroke="#00c000" stroke-width="1"/>
<path d="M159.5 227.4 V235.8" stroke="#00c000" stroke-width="1"/>
<path d="M168.8 226.4 V234.7" stroke="#00c000" stroke-width="1"/>
<path d="M171.5 226.1 V234.4" stroke="#00c000" stroke-width="1"/>
<path d="M466 141.5H470M466 150.5H468M466 158.5H470M466 166.5H468M466 175.5H470M466 183.5H468M466 191.5H470M466 200.5H468M466 208.5H470M466 216.5H468M466 225.5H470M466 233.5H468M466 241.5H470M466 250.5H468M466 258.5H470M466 266.5H468" stroke="#0000ee" stroke-width="1" shape-rendering="crispEdges"/>
<defs><linearGradient id="g2" x1="0" y1="0" x2="0" y2="1"><stop offset="0" stop-color="#242424"/><stop offset="1" stop-color="#000"/></linearGradient></defs>
<rect x="46" y="301" width="422" height="137" fill="#000" shape-rendering="crispEdges"/>
<rect x="48" y="303" width="418" height="134" fill="url(#g2)" shape-rendering="crispEdges"/>
<path d="M48 317.5H466M48 343.5H466M48 370.5H466M48 397.5H466M48 423.5H466M57.5 303V437M66.5 303V437M75.5 303V437M85.5 303V437M103.5 303V437M113.5 303V437M122.5 303V437M131.5 303V437M150.5 303V437M159.5 303V437M168.5 303V437M178.5 303V437M196.5 303V437M205.5 303V437M215.5 303V437M224.5 303V437M243.5 303V437M252.5 303V437M261.5 303V437M270.5 303V437M289.5 303V437M298.5 303V437M308.5 303V437M317.5 303V437M335.5 303V437M345.5 303V437M354.5 303V437M363.5 303V437M382.5 303V437M391.5 303V437M400.5 303V437M410.5 303V437M428.5 303V437M438.5 303V437M447.5 303V437M456.5 303V437" stroke="#0000b4" stroke-width="1" fill="none" shape-rendering="crispEdges"/>
<path d="M45 303.5H466M45 330.5H466M45 357.5H466M45 383.5H466M45 410.5H466M45 436.5H466M94.5 303V437M140.5 303V437M187.5 303V437M233.5 303V437M280.5 303V437M326.5 303V437M373.5 303V437M419.5 303V437" stroke="#0000ee" stroke-width="1" fill="none" shape-rendering="crispEdges"/>
<path d="M130 435h1V437.0h-1ZM134 435h1V437.0h-1ZM142 429h1V437.0h-1ZM146 428h1V437.0h-1ZM149 426h1V437.0h-1ZM151 424h1V437.0h-1ZM152 431h1V437.0h-1ZM165 418h1V437.0h-1ZM167 426h1V437.0h-1ZM191 388h1V437.0h-1ZM192 404h1V437.0h-1ZM216 378h1V437.0h-1ZM251 343h1V437.0h-1ZM252 352h1V437.0h-1ZM257 349h1V437.0h-1ZM277 349h1V437.0h-1ZM301 344h1V437.0h-1ZM302 353h1V437.0h-1ZM303 345h1V437.0h-1ZM309 350h1V437.0h-1ZM321 340h1V437.0h-1ZM335 352h1V437.0h-1ZM364 357h1V437.0h-1ZM379 346h1V437.0h-1ZM381 347h1V437.0h-1ZM396 355h1V437.0h-1ZM425 367h1V437.0h-1Z" fill="#ff0048" shape-rendering="crispEdges"/>
<path d="M131 435h1V437.0h-1ZM138 432h1V437.0h-1ZM154 422h1V437.0h-1ZM155 427h1V437.0h-1ZM156 425h1V437.0h-1ZM157 431h1V437.0h-1ZM158 424h1V437.0h-1ZM159 429h1V437.0h-1ZM168 409h1V437.0h-1ZM174 408h1V437.0h-1ZM175 407h1V437.0h-1ZM184 397h1V437.0h-1ZM188 407h1V437.0h-1ZM217 364h1V437.0h-1ZM230 361h1V437.0h-1ZM243 363h1V437.0h-1ZM244 348h1V437.0h-1ZM245 349h1V437.0h-1ZM246 361h1V437.0h-1ZM258 343h1V437.0h-1ZM279 359h1V437.0h-1ZM280 346h1V437.0h-1ZM298 361h1V437.0h-1ZM299 361h1V437.0h-1ZM336 349h1V437.0h-1ZM349 365h1V437.0h-1ZM350 352h1V437.0h-1ZM365 356h1V437.0h-1ZM366 344h1V437.0h-1ZM367 362h1V437.0h-1ZM368 346h1V437.0h-1ZM369 360h1V437.0h-1ZM382 358h1V437.0h-1ZM391 355h1V437.0h-1ZM392 363h1V437.0h-1ZM410 372h1V437.0h-1ZM414 361h1V437.0h-1ZM415 345h1V437.0h-1ZM422 354h1V437.0h-1ZM426 351h1V437.0h-1ZM427 349h1V437.0h-1ZM430 353h1V437.0h-1ZM434 366h1V437.0h-1ZM439 358h1V437.0h-1ZM442 360h1V437.0h-1ZM445 385h1V437.0h-1Z" fill="#ff0060" shape-rendering="crispEdges"/>
<path d="M132 432h1V437.0h-1ZM150 426h1V437.0h-1ZM162 411h1V437.0h-1ZM169 415h1V437.0h-1ZM204 380h1V437.0h-1ZM205 362h1V437.0h-1ZM206 371h1V437.0h-1ZM218 374h1V437.0h-1ZM219 361h1V437.0h-1ZM305 343h1V437.0h-1ZM320 336h1V437.0h-1ZM331 350h1V437.0h-1ZM332 349h1V437.0h-1ZM333 342h1V437.0h-1ZM334 373h1V437.0h-1ZM337 357h1V437.0h-1ZM338 343h1V437.0h-1ZM353 367h1V437.0h-1ZM354 356h1V437.0h-1ZM389 351h1V437.0h-1ZM390 350h1V437.0h-1ZM397 368h1V437.0h-1ZM398 351h1V437.0h-1ZM399 365h1V437.0h-1ZM408 346h1V437.0h-1ZM409 358h1V437.0h-1ZM418 363h1V437.0h-1ZM440 364h1V437.0h-1Z" fill="#ff0000" shape-rendering="crispEdges"/>
<path d="M133 435h1V437.0h-1ZM145 431h1V437.0h-1ZM147 429h1V437.0h-1ZM148 429h1V437.0h-1ZM160 420h1V437.0h-1ZM161 418h1V437.0h-1ZM176 409h1V437.0h-1ZM189 393h1V437.0h-1ZM190 408h1V437.0h-1ZM200 373h1V437.0h-1ZM201 385h1V437.0h-1ZM202 379h1V437.0h-1ZM203 381h1V437.0h-1ZM225 369h1V437.0h-1ZM226 364h1V437.0h-1ZM253 350h1V437.0h-1ZM259 351h1V437.0h-1ZM260 368h1V437.0h-1ZM261 342h1V437.0h-1ZM262 350h1V437.0h-1ZM263 344h1V437.0h-1ZM264 359h1V437.0h-1ZM265 342h1V437.0h-1ZM266 342h1V437.0h-1ZM267 359h1V437.0h-1ZM268 357h1V437.0h-1ZM300 366h1V437.0h-1ZM306 341h1V437.0h-1ZM307 350h1V437.0h-1ZM330 346h1V437.0h-1ZM342 364h1V437.0h-1ZM343 362h1V437.0h-1ZM356 366h1V437.0h-1ZM357 355h1V437.0h-1ZM358 356h1V437.0h-1ZM359 349h1V437.0h-1ZM360 363h1V437.0h-1ZM374 340h1V437.0h-1ZM402 364h1V437.0h-1ZM403 351h1V437.0h-1ZM404 379h1V437.0h-1ZM405 362h1V437.0h-1ZM406 361h1V437.0h-1ZM407 350h1V437.0h-1ZM424 349h1V437.0h-1ZM432 362h1V437.0h-1ZM433 357h1V437.0h-1ZM446 362h1V437.0h-1ZM447 375h1V437.0h-1ZM448 379h1V437.0h-1ZM449 369h1V437.0h-1ZM451 381h1V437.0h-1Z" fill="#ff00b8" shape-rendering="crispEdges"/>
<path d="M135 433h1V437.0h-1ZM136 430h1V437.0h-1ZM170 418h1V437.0h-1ZM171 412h1V437.0h-1ZM172 392h1V437.0h-1ZM181 399h1V437.0h-1ZM182 402h1V437.0h-1ZM183 408h1V437.0h-1ZM186 402h1V437.0h-1ZM207 371h1V437.0h-1ZM208 386h1V437.0h-1ZM209 381h1V437.0h-1ZM212 372h1V437.0h-1ZM213 366h1V437.0h-1ZM214 363h1V437.0h-1ZM227 368h1V437.0h-1ZM228 368h1V437.0h-1ZM254 360h1V437.0h-1ZM255 374h1V437.0h-1ZM256 357h1V437.0h-1ZM269 343h1V437.0h-1ZM270 363h1V437.0h-1ZM271 351h1V437.0h-1ZM272 353h1V437.0h-1ZM273 363h1V437.0h-1ZM274 363h1V437.0h-1ZM275 357h1V437.0h-1ZM278 354h1V437.0h-1ZM281 350h1V437.0h-1ZM287 363h1V437.0h-1ZM288 361h1V437.0h-1ZM308 341h1V437.0h-1ZM317 349h1V437.0h-1ZM322 352h1V437.0h-1ZM325 352h1V437.0h-1ZM326 350h1V437.0h-1ZM327 351h1V437.0h-1ZM328 340h1V437.0h-1ZM329 356h1V437.0h-1ZM344 366h1V437.0h-1ZM345 366h1V437.0h-1ZM346 354h1V437.0h-1ZM347 369h1V437.0h-1ZM348 355h1V437.0h-1ZM355 362h1V437.0h-1ZM361 367h1V437.0h-1ZM370 357h1V437.0h-1ZM373 358h1V437.0h-1ZM377 349h1V437.0h-1ZM378 347h1V437.0h-1ZM394 352h1V437.0h-1ZM395 355h1V437.0h-1ZM400 364h1V437.0h-1ZM401 352h1V437.0h-1ZM411 365h1V437.0h-1ZM412 376h1V437.0h-1ZM413 352h1V437.0h-1ZM416 357h1V437.0h-1ZM417 359h1V437.0h-1ZM428 363h1V437.0h-1ZM429 356h1V437.0h-1ZM431 351h1V437.0h-1Z" fill="#ff0070" shape-rendering="crispEdges"/>
<path d="M137 434h1V437.0h-1ZM143 433h1V437.0h-1ZM153 427h1V437.0h-1ZM173 398h1V437.0h-1ZM185 392h1V437.0h-1ZM187 412h1V437.0h-1ZM193 388h1V437.0h-1ZM194 387h1V437.0h-1ZM195 386h1V437.0h-1ZM196 403h1V437.0h-1ZM197 376h1V437.0h-1ZM198 385h1V437.0h-1ZM199 382h1V437.0h-1ZM220 364h1V437.0h-1ZM222 369h1V437.0h-1ZM223 371h1V437.0h-1ZM224 361h1V437.0h-1ZM314 340h1V437.0h-1ZM315 340h1V437.0h-1ZM316 340h1V437.0h-1ZM323 355h1V437.0h-1ZM324 341h1V437.0h-1ZM351 366h1V437.0h-1ZM352 354h1V437.0h-1ZM362 362h1V437.0h-1ZM363 364h1V437.0h-1ZM371 359h1V437.0h-1ZM372 358h1V437.0h-1ZM375 340h1V437.0h-1ZM376 360h1V437.0h-1ZM383 369h1V437.0h-1ZM384 355h1V437.0h-1ZM385 360h1V437.0h-1ZM386 356h1V437.0h-1ZM387 347h1V437.0h-1ZM388 346h1V437.0h-1ZM436 358h1V437.0h-1ZM437 367h1V437.0h-1ZM441 358h1V437.0h-1ZM443 386h1V437.0h-1ZM444 363h1V437.0h-1Z" fill="#ff0090" shape-rendering="crispEdges"/>
<path d="M139 432h1V437.0h-1ZM140 428h1V437.0h-1ZM144 432h1V437.0h-1ZM163 429h1V437.0h-1ZM164 408h1V437.0h-1ZM166 408h1V437.0h-1ZM177 400h1V437.0h-1ZM178 381h1V437.0h-1ZM179 414h1V437.0h-1ZM180 399h1V437.0h-1ZM221 370h1V437.0h-1ZM239 364h1V437.0h-1ZM247 352h1V437.0h-1ZM276 347h1V437.0h-1ZM304 359h1V437.0h-1ZM310 345h1V437.0h-1ZM311 346h1V437.0h-1ZM312 375h1V437.0h-1ZM313 338h1V437.0h-1ZM318 348h1V437.0h-1ZM319 342h1V437.0h-1ZM339 350h1V437.0h-1ZM340 352h1V437.0h-1ZM341 356h1V437.0h-1ZM380 363h1V437.0h-1ZM419 352h1V437.0h-1ZM420 370h1V437.0h-1ZM421 354h1V437.0h-1ZM450 380h1V437.0h-1Z" fill="#ff0020" shape-rendering="crispEdges"/>
<path d="M141 432h1V437.0h-1ZM210 364h1V437.0h-1ZM211 378h1V437.0h-1ZM215 375h1V437.0h-1ZM229 359h1V437.0h-1ZM231 356h1V437.0h-1ZM232 363h1V437.0h-1ZM233 351h1V437.0h-1ZM234 357h1V437.0h-1ZM235 352h1V437.0h-1ZM236 361h1V437.0h-1ZM237 364h1V437.0h-1ZM238 358h1V437.0h-1ZM240 365h1V437.0h-1ZM241 355h1V437.0h-1ZM242 351h1V437.0h-1ZM248 352h1V437.0h-1ZM249 359h1V437.0h-1ZM250 373h1V437.0h-1ZM282 363h1V437.0h-1ZM283 363h1V437.0h-1ZM284 368h1V437.0h-1ZM285 362h1V437.0h-1ZM286 355h1V437.0h-1ZM289 359h1V437.0h-1ZM290 350h1V437.0h-1ZM291 352h1V437.0h-1ZM292 360h1V437.0h-1ZM293 344h1V437.0h-1ZM294 346h1V437.0h-1ZM295 343h1V437.0h-1ZM296 346h1V437.0h-1ZM297 347h1V437.0h-1ZM393 363h1V437.0h-1ZM423 366h1V437.0h-1ZM435 357h1V437.0h-1ZM438 369h1V437.0h-1Z" fill="#ff00d0" shape-rendering="crispEdges"/>
<path d="M176 390h1V436.5h-1Z" fill="#ff0090" shape-rendering="crispEdges"/>
<path d="M180 379h1V436.5h-1Z" fill="#ff0090" shape-rendering="crispEdges"/>
<path d="M185 397h1V436.5h-1Z" fill="#ff0090" shape-rendering="crispEdges"/>
<path d="M113 414h1.5V436.5h-1.5Z" fill="#ff0070" shape-rendering="crispEdges"/>
<path d="M51 434h1V436.5h-1Z" fill="#ff0000" shape-rendering="crispEdges"/>
<path d="M55.4 436.2H136.2" stroke="#00e000" stroke-width="1.2" stroke-dasharray="9 2 3 1 14 3"/>
<path d="M129.7 435.7H168.8" stroke="#ffff00" stroke-width="1.5" stroke-dasharray="2 5 1 7"/>
<rect x="357" y="383.3" width="1" height="53.2" fill="#000" shape-rendering="crispEdges"/>
<rect x="453" y="141" width="1" height="134" fill="#e6dada" shape-rendering="crispEdges"/>
<rect x="453" y="303" width="1" height="134" fill="#e6dada" shape-rendering="crispEdges"/>
<text transform="translate(41.3,143.9) scale(0.87,1)" text-anchor="end" font-size="12.2" stroke="#000" stroke-width="0.3">10000</text>
<text transform="translate(41.3,170.5) scale(0.87,1)" text-anchor="end" font-size="12.2" stroke="#000" stroke-width="0.3">8000</text>
<text transform="translate(41.3,197.1) scale(0.87,1)" text-anchor="end" font-size="12.2" stroke="#000" stroke-width="0.3">6000</text>
<text transform="translate(41.3,223.7) scale(0.87,1)" text-anchor="end" font-size="12.2" stroke="#000" stroke-width="0.3">4000</text>
<text transform="translate(41.3,250.3) scale(0.87,1)" text-anchor="end" font-size="12.2" stroke="#000" stroke-width="0.3">2000</text>
<text transform="translate(41.3,305.9) scale(0.87,1)" text-anchor="end" font-size="12.2" stroke="#000" stroke-width="0.3">2000</text>
<text transform="translate(41.3,332.5) scale(0.87,1)" text-anchor="end" font-size="12.2" stroke="#000" stroke-width="0.3">1600</text>
<text transform="translate(41.3,359.1) scale(0.87,1)" text-anchor="end" font-size="12.2" stroke="#000" stroke-width="0.3">1200</text>
<text transform="translate(41.3,385.7) scale(0.87,1)" text-anchor="end" font-size="12.2" stroke="#000" stroke-width="0.3">800</text>
<text transform="translate(41.3,412.3) scale(0.87,1)" text-anchor="end" font-size="12.2" stroke="#000" stroke-width="0.3">400</text>
<text transform="translate(470.5,143.9) scale(0.87,1)" text-anchor="start" font-size="12.2" stroke="#000" stroke-width="0.3">16</text>
<text transform="translate(470.5,160.5) scale(0.87,1)" text-anchor="start" font-size="12.2" stroke="#000" stroke-width="0.3">14</text>
<text transform="translate(470.5,177.2) scale(0.87,1)" text-anchor="start" font-size="12.2" stroke="#000" stroke-width="0.3">12</text>
<text transform="translate(470.5,193.8) scale(0.87,1)" text-anchor="start" font-size="12.2" stroke="#000" stroke-width="0.3">10</text>
<text transform="translate(470.5,210.4) scale(0.87,1)" text-anchor="start" font-size="12.2" stroke="#000" stroke-width="0.3">8</text>
<text transform="translate(470.5,227.0) scale(0.87,1)" text-anchor="start" font-size="12.2" stroke="#000" stroke-width="0.3">6</text>
<text transform="translate(470.5,243.7) scale(0.87,1)" text-anchor="start" font-size="12.2" stroke="#000" stroke-width="0.3">4</text>
<text transform="translate(470.5,260.3) scale(0.87,1)" text-anchor="start" font-size="12.2" stroke="#000" stroke-width="0.3">2</text>
<text transform="translate(50.0,287.6) scale(0.87,1)" text-anchor="middle" font-size="12.2" stroke="#000" stroke-width="0.3">0.0</text>
<text transform="translate(96.4,287.6) scale(0.87,1)" text-anchor="middle" font-size="12.2" stroke="#000" stroke-width="0.3">0.5</text>
<text transform="translate(142.9,287.6) scale(0.87,1)" text-anchor="middle" font-size="12.2" stroke="#000" stroke-width="0.3">1.0</text>
<text transform="translate(189.3,287.6) scale(0.87,1)" text-anchor="middle" font-size="12.2" stroke="#000" stroke-width="0.3">1.5</text>
<text transform="translate(235.8,287.6) scale(0.87,1)" text-anchor="middle" font-size="12.2" stroke="#000" stroke-width="0.3">2.0</text>
<text transform="translate(282.2,287.6) scale(0.87,1)" text-anchor="middle" font-size="12.2" stroke="#000" stroke-width="0.3">2.5</text>
<text transform="translate(328.7,287.6) scale(0.87,1)" text-anchor="middle" font-size="12.2" stroke="#000" stroke-width="0.3">3.0</text>
<text transform="translate(375.1,287.6) scale(0.87,1)" text-anchor="middle" font-size="12.2" stroke="#000" stroke-width="0.3">3.5</text>
<text transform="translate(421.6,287.6) scale(0.87,1)" text-anchor="middle" font-size="12.2" stroke="#000" stroke-width="0.3">4.0</text>
<text transform="translate(468.0,287.6) scale(0.87,1)" text-anchor="middle" font-size="12.2" stroke="#000" stroke-width="0.3">4.5</text>
<text transform="translate(50.0,449.6) scale(0.87,1)" text-anchor="middle" font-size="12.2" stroke="#000" stroke-width="0.3">0.0</text>
<text transform="translate(96.4,449.6) scale(0.87,1)" text-anchor="middle" font-size="12.2" stroke="#000" stroke-width="0.3">0.5</text>
<text transform="translate(142.9,449.6) scale(0.87,1)" text-anchor="middle" font-size="12.2" stroke="#000" stroke-width="0.3">1.0</text>
<text transform="translate(189.3,449.6) scale(0.87,1)" text-anchor="middle" font-size="12.2" stroke="#000" stroke-width="0.3">1.5</text>
<text transform="translate(235.8,449.6) scale(0.87,1)" text-anchor="middle" font-size="12.2" stroke="#000" stroke-width="0.3">2.0</text>
<text transform="translate(282.2,449.6) scale(0.87,1)" text-anchor="middle" font-size="12.2" stroke="#000" stroke-width="0.3">2.5</text>
<text transform="translate(328.7,449.6) scale(0.87,1)" text-anchor="middle" font-size="12.2" stroke="#000" stroke-width="0.3">3.0</text>
<text transform="translate(375.1,449.6) scale(0.87,1)" text-anchor="middle" font-size="12.2" stroke="#000" stroke-width="0.3">3.5</text>
<text transform="translate(421.6,449.6) scale(0.87,1)" text-anchor="middle" font-size="12.2" stroke="#000" stroke-width="0.3">4.0</text>
<text transform="translate(468.0,449.6) scale(0.87,1)" text-anchor="middle" font-size="12.2" stroke="#000" stroke-width="0.3">4.5</text>
</svg>
<div style="position:absolute;left:491px;top:134.5px;width:140px;height:83.5px;border:1px solid #bcb8c6;border-radius:3.5px;box-sizing:border-box;"></div>
<div style="position:absolute;left:499px;top:133.5px;width:45px;height:3px;background:#f9f9f8;"></div>
<span class="t" style="left:501.0px;top:127.6px;color:#0046d5;font-size:11px;letter-spacing:-0.25px;">Plateinfo</span>
<span class="t" style="left:503.0px;top:143.1px;color:#000;font-size:11px;letter-spacing:-0.3px;">Type:</span>
<span class="t" style="left:543.0px;top:143.1px;color:#000080;font-size:11px;letter-spacing:-0.3px;">DVD+R</span>
<span class="t" style="left:503.0px;top:160.8px;color:#000;font-size:11px;letter-spacing:-0.3px;">ID:</span>
<span class="t" style="left:543.0px;top:160.8px;color:#000080;font-size:11px;letter-spacing:-0.3px;">RITEK R03</span>
<span class="t" style="left:503.0px;top:178.5px;color:#000;font-size:11px;letter-spacing:-0.3px;">Dato:</span>
<span class="t" style="left:543.0px;top:178.5px;color:#000080;font-size:11px;letter-spacing:-0.3px;">26 Mar 2006</span>
<span class="t" style="left:503.0px;top:196.2px;color:#000;font-size:11px;letter-spacing:-0.3px;">Navn:</span>
<span class="t" style="left:543.0px;top:196.2px;color:#000080;font-size:11px;letter-spacing:0.15px;max-width:83.6px;overflow:hidden;">STAR_WARS_EF</span>
<div style="position:absolute;left:491px;top:226px;width:140px;height:204px;border:1px solid #bcb8c6;border-radius:3.5px;box-sizing:border-box;"></div>
<div style="position:absolute;left:499px;top:225px;width:57px;height:3px;background:#f9f9f8;"></div>
<span class="t" style="left:501.0px;top:219.6px;color:#0046d5;font-size:11px;letter-spacing:-0.25px;">Innstillinger</span>
<span class="t" style="left:500.0px;top:234.1px;color:#000;font-size:11px;letter-spacing:-0.3px;">Hastighet:</span>
<div style="position:absolute;left:500px;top:250px;width:84px;height:21px;background:#fff;border:1px solid #7f9db9;box-sizing:border-box;"></div>
<span class="t" style="left:505.0px;top:254.1px;color:#000;font-size:11px;letter-spacing:0px;">8 X</span>
<div style="position:absolute;left:566px;top:251px;width:17px;height:19px;border-radius:2px;background:linear-gradient(#f4f4fa,#dcdce8 50%,#bcbcd0);box-shadow:inset 0 0 0 1px #ccccdc, inset 1px 1px 0 1px #fff;"></div>
<svg style="position:absolute;left:566px;top:251px" width="17" height="19"><path d="M4.5 7.5 L8.5 11.5 L12.5 7.5" stroke="#303040" stroke-width="2" fill="none"/></svg>
<div style="position:absolute;left:592px;top:248px;width:23px;height:22.5px;background:#d8d6d0;box-shadow:inset 1px 1px 0 #fff, inset -1px -1px 0 #404040, inset -2px -2px 0 #909090;"></div>
<div style="position:absolute;left:596px;top:251px;width:14.5px;height:16px;background:#fff;border:1.5px solid #101010;box-sizing:border-box;"></div>
<svg style="position:absolute;left:597px;top:251.5px" width="13" height="15"><path d="M9 3.5 H5.5 Q4 3.5 4 5 V7" stroke="#00a000" stroke-width="1.4" fill="none"/><path d="M8 1.5 L10.5 3.5 L8 5.5Z" fill="#00a000"/><path d="M4 11.5 H7.5 Q9 11.5 9 10 V8" stroke="#00a000" stroke-width="1.4" fill="none"/><path d="M5 9.5 L2.5 11.5 L5 13.5Z" fill="#00a000"/></svg>
<span class="t" style="left:503.0px;top:281.1px;color:#000;font-size:11px;letter-spacing:-0.3px;">Start:</span>
<span class="t" style="left:503.0px;top:303.6px;color:#000;font-size:11px;letter-spacing:-0.3px;">Slutt</span>
<div style="position:absolute;left:554px;top:277px;width:60px;height:19px;background:#fff;border:1px solid #a5acb2;box-sizing:border-box;"></div>
<div style="position:absolute;left:554px;top:300px;width:60px;height:19px;background:#fff;border:1px solid #a5acb2;box-sizing:border-box;"></div>
<span class="t" style="left:558.0px;top:279.4px;color:#000;font-size:11px;letter-spacing:-0.2px;">0000 MB</span>
<span class="t" style="left:558.0px;top:301.9px;color:#000;font-size:11px;letter-spacing:-0.2px;">4465 MB</span>
<div style="position:absolute;left:502px;top:324.5px;width:13px;height:13px;border:1px solid #1c5180;box-sizing:border-box;background:linear-gradient(135deg,#dcdcd7,#fff 70%);"></div>
<span class="t" style="left:517.7px;top:324.1px;color:#000;font-size:11px;letter-spacing:-0.27px;">Hurtigsøk</span>
<div style="position:absolute;left:502px;top:345.5px;width:13px;height:13px;border:1px solid #1c5180;box-sizing:border-box;background:linear-gradient(135deg,#dcdcd7,#fff 70%);"></div>
<svg style="position:absolute;left:502px;top:345.5px" width="13" height="13"><path d="M3 5 L5.5 7.5 L10 3 V6 L5.5 10.5 L3 8Z" fill="#21a121"/></svg>
<span class="t" style="left:517.7px;top:345.1px;color:#000;font-size:11px;letter-spacing:-0.27px;">Vis C1/PIE</span>
<div style="position:absolute;left:502px;top:361.5px;width:13px;height:13px;border:1px solid #1c5180;box-sizing:border-box;background:linear-gradient(135deg,#dcdcd7,#fff 70%);"></div>
<svg style="position:absolute;left:502px;top:361.5px" width="13" height="13"><path d="M3 5 L5.5 7.5 L10 3 V6 L5.5 10.5 L3 8Z" fill="#21a121"/></svg>
<span class="t" style="left:517.7px;top:361.1px;color:#000;font-size:11px;letter-spacing:-0.27px;">Vis C2/PIF</span>
<div style="position:absolute;left:502px;top:378.5px;width:13px;height:13px;border:1px solid #cac8bb;box-sizing:border-box;background:#fff;"></div>
<svg style="position:absolute;left:502px;top:378.5px" width="13" height="13"><path d="M3 5 L5.5 7.5 L10 3 V6 L5.5 10.5 L3 8Z" fill="#cac8bb"/></svg>
<span class="t" style="left:517.7px;top:378.1px;color:#aca899;font-size:11px;letter-spacing:-0.27px;">Vis sjelving</span>
<div style="position:absolute;left:502px;top:394.5px;width:13px;height:13px;border:1px solid #1c5180;box-sizing:border-box;background:linear-gradient(135deg,#dcdcd7,#fff 70%);"></div>
<svg style="position:absolute;left:502px;top:394.5px" width="13" height="13"><path d="M3 5 L5.5 7.5 L10 3 V6 L5.5 10.5 L3 8Z" fill="#21a121"/></svg>
<span class="t" style="left:517.7px;top:394.1px;color:#000;font-size:11px;letter-spacing:-0.27px;">Vis lesehastighet</span>
<div style="position:absolute;left:502px;top:411px;width:13px;height:13px;border:1px solid #cac8bb;box-sizing:border-box;background:#fff;"></div>
<svg style="position:absolute;left:502px;top:411px" width="13" height="13"><path d="M3 5 L5.5 7.5 L10 3 V6 L5.5 10.5 L3 8Z" fill="#cac8bb"/></svg>
<span class="t" style="left:517.7px;top:410.6px;color:#aca899;font-size:11px;letter-spacing:-0.27px;">Vis skrivehastighet</span>
<div style="position:absolute;left:491px;top:435px;width:140px;height:27px;border:1px solid #bcb8c6;border-radius:3.5px;box-sizing:border-box;"></div>
<span class="t" style="left:503.0px;top:442.1px;color:#000;font-size:11px;letter-spacing:-0.3px;">Kvalitetspoeng:</span>
<span class="t" style="right:20.0px;top:442.1px;color:#000080;font-size:11px;letter-spacing:-0.3px;">0</span>
<div style="position:absolute;left:491px;top:467px;width:140px;height:57px;border:1px solid #bcb8c6;border-radius:3.5px;box-sizing:border-box;"></div>
<span class="t" style="left:503.0px;top:476.1px;color:#000;font-size:11px;letter-spacing:-0.3px;">Forløp:</span>
<span class="t" style="right:19.5px;top:476.1px;color:#000080;font-size:11px;letter-spacing:-0.4px;">100 %</span>
<span class="t" style="left:503.0px;top:491.6px;color:#000;font-size:11px;letter-spacing:-0.3px;">Posisjon</span>
<span class="t" style="right:20.5px;top:491.6px;color:#000080;font-size:11px;letter-spacing:-0.2px;">4464 MB</span>
<span class="t" style="left:503.0px;top:506.6px;color:#000;font-size:11px;letter-spacing:-0.3px;">Hastighet:</span>
<span class="t" style="right:19.5px;top:506.6px;color:#000080;font-size:11px;letter-spacing:0px;">7.86 X</span>
<div style="position:absolute;left:14px;top:467px;width:146px;height:57px;border:1px solid #b4b4b4;box-sizing:border-box;"></div>
<div style="position:absolute;left:21px;top:466px;width:56px;height:3px;background:#f4f4f0;"></div>
<div style="position:absolute;left:23.7px;top:464px;width:8.5px;height:8.5px;background:#00ffff;border:1px solid #000;box-sizing:border-box;"></div>
<span class="t" style="left:35.0px;top:461.6px;color:#000;font-size:11px;letter-spacing:-0.25px;">PI Errors</span>
<div style="position:absolute;left:172px;top:467px;width:146px;height:57px;border:1px solid #b4b4b4;box-sizing:border-box;"></div>
<div style="position:absolute;left:179px;top:466px;width:65px;height:3px;background:#f4f4f0;"></div>
<div style="position:absolute;left:181.7px;top:464px;width:8.5px;height:8.5px;background:#ffff00;border:1px solid #000;box-sizing:border-box;"></div>
<span class="t" style="left:193.0px;top:461.6px;color:#000;font-size:11px;letter-spacing:-0.25px;">PI Failures</span>
<div style="position:absolute;left:331px;top:467px;width:147px;height:43px;border:1px solid #b4b4b4;box-sizing:border-box;"></div>
<div style="position:absolute;left:338px;top:466px;width:52px;height:3px;background:#f4f4f0;"></div>
<div style="position:absolute;left:340.7px;top:464px;width:8.5px;height:8.5px;background:#ff00ff;border:1px solid #000;box-sizing:border-box;"></div>
<span class="t" style="left:352.0px;top:461.6px;color:#000;font-size:11px;letter-spacing:-0.25px;">Sjelving</span>
<span class="t" style="left:22.8px;top:477.6px;color:#000;font-size:11px;letter-spacing:-0.4px;">Gjennomsnitt:</span>
<span class="t" style="right:490.5px;top:477.6px;color:#000080;font-size:11px;letter-spacing:-0.1px;">1421.84</span>
<span class="t" style="left:22.8px;top:492.6px;color:#000;font-size:11px;letter-spacing:-0.4px;">Maksimum:</span>
<span class="t" style="right:490.5px;top:492.6px;color:#000080;font-size:11px;letter-spacing:-0.1px;">5743</span>
<span class="t" style="left:22.8px;top:507.6px;color:#000;font-size:11px;letter-spacing:-0.4px;">Totalt:</span>
<span class="t" style="right:490.5px;top:507.6px;color:#000080;font-size:11px;letter-spacing:-0.1px;">13969548</span>
<span class="t" style="left:181.8px;top:477.6px;color:#000;font-size:11px;letter-spacing:-0.4px;">Gjennomsnitt:</span>
<span class="t" style="right:331.5px;top:477.6px;color:#000080;font-size:11px;letter-spacing:-0.1px;">571.21</span>
<span class="t" style="left:181.8px;top:492.6px;color:#000;font-size:11px;letter-spacing:-0.4px;">Maksimum:</span>
<span class="t" style="right:331.5px;top:492.6px;color:#000080;font-size:11px;letter-spacing:-0.1px;">1540</span>
<span class="t" style="left:181.8px;top:507.6px;color:#000;font-size:11px;letter-spacing:-0.4px;">Totalt:</span>
<span class="t" style="right:331.5px;top:507.6px;color:#000080;font-size:11px;letter-spacing:-0.1px;">3285406</span>
<span class="t" style="left:340.8px;top:477.6px;color:#000;font-size:11px;letter-spacing:-0.4px;">Gjennomsnitt:</span>
<span class="t" style="left:466.0px;top:477.6px;color:#000080;font-size:11px;letter-spacing:-0.3px;">-</span>
<span class="t" style="left:340.8px;top:492.6px;color:#000;font-size:11px;letter-spacing:-0.4px;">Maksimum:</span>
<span class="t" style="left:466.0px;top:492.6px;color:#000080;font-size:11px;letter-spacing:-0.3px;">-</span>
<span class="t" style="left:340.8px;top:510.6px;color:#000;font-size:11px;letter-spacing:-0.3px;">PO-feil:</span>
<span class="t" style="left:466.0px;top:510.6px;color:#000080;font-size:11px;letter-spacing:-0.3px;">-</span>
</body></html>
